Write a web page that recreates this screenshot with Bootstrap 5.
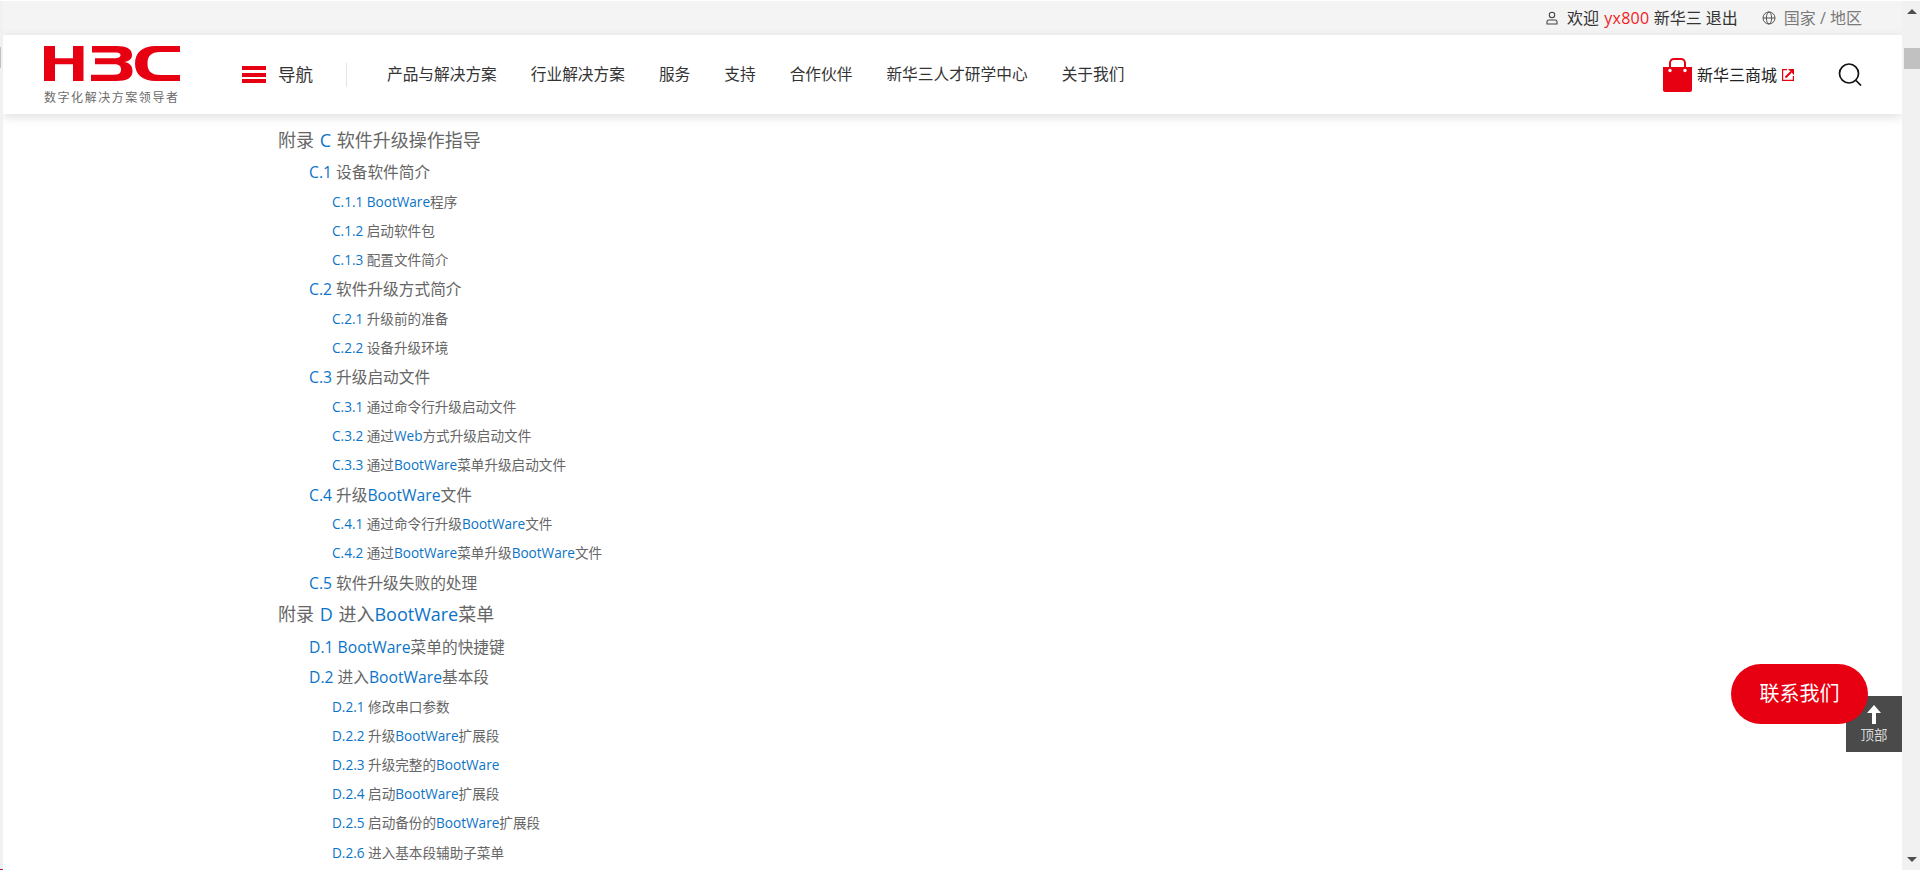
<!doctype html>
<html lang="zh-CN"><head><meta charset="utf-8"><title>H3C</title>
<link href="https://cdn.jsdelivr.net/npm/bootstrap@5.3.0/dist/css/bootstrap.min.css" rel="stylesheet">
<style>
html,body{height:870px;overflow:hidden;background:#fff}
body{font-family:"Open Sans","Noto Sans CJK SC",sans-serif;color:#666;padding-top:1px}
.ledge{width:3px;flex:none;background:#f1f1f1;height:869px;position:relative}
.ledge i{position:absolute;left:0;top:46px;width:1px;height:21px;background:#c1c1c1}
.ledge b{position:absolute;left:0;bottom:0;width:3px;height:1px;background:linear-gradient(90deg,#e60012 66%,#0b74c8 66%)}
.pg{height:869px;overflow:hidden;min-width:0}
.topstrip{height:34px;background:#f4f4f4;font-size:16px;color:#333;padding-right:40px}
.topstrip .red{color:#f01c24;letter-spacing:.3px;margin-left:1px}
.topstrip .grey{color:#7a7a7a}
.hdr{height:79px;background:#fff;box-shadow:0 3px 10px rgba(0,0,0,.13);position:relative;z-index:2;padding-left:41px}
.logotxt{font-size:12px;color:#6b6b6b;line-height:14px;letter-spacing:1.55px;margin-top:10px;white-space:nowrap}
.logobox{width:136px;height:58px;margin-top:1px}
.logobox svg{display:block}
.burger{width:24px;height:17px;display:flex;flex-direction:column;justify-content:space-between;margin-left:62px}
.burger i{display:block;height:4px;background:#e60012}
.navlbl{font-size:17.5px;color:#333;margin-left:12px}
.vsep{width:1px;height:24px;background:#e4e4e4;margin:0 40px 0 33px}
.mainnav{gap:34px;font-size:15.7px;color:#333}
.shop{font-size:16px;color:#222;margin-right:44px;gap:5px}
.srch{margin-right:40px}
.toc{padding:9px 0 0 275px;position:relative}
.toc a{color:#0b74c8;text-decoration:none}
.t1{font-size:18px;line-height:34px;height:34px;word-spacing:1px}
.t1.tail{margin-bottom:1px}
.t2{font-size:15.7px;line-height:29.7px;height:29.7px;padding-left:31px;padding-top:1px}
.t3{font-size:13.6px;line-height:29.2px;height:29.2px;padding-left:54px}
.sbar{width:18px;background:#f1f1f1;height:869px;position:relative;flex:none}
.sthumb{position:absolute;top:47px;left:2px;right:0;height:21px;background:#c1c1c1}
.aup,.adn{position:absolute;left:5px;width:0;height:0;border-left:5px solid transparent;border-right:5px solid transparent}
.aup{top:8px;border-bottom:5px solid #505050}
.adn{bottom:8px;border-top:5px solid #505050}
.totop{position:absolute;left:1846px;top:696px;width:56px;height:56px;background:#4a4a4a;color:#d8d8d8;font-size:13.5px;text-align:center;padding-top:9px;line-height:14px;z-index:3}
.contact{position:absolute;left:1731px;top:664px;width:137px;height:60px;border-radius:30px;background:#e60012;color:#fff;font-size:20px;z-index:4}
</style></head>
<body class="d-flex">
<div class="ledge"><i></i><b></b></div>
<div class="pg flex-grow-1">
<div class="topstrip d-flex align-items-center justify-content-end">
<svg width="14" height="14" viewBox="0 0 14 14" fill="none" stroke="#444" stroke-width="1.1" class="me-2"><circle cx="7" cy="4" r="2.7"/><path d="M2 13v-2.200c0-1 .8-1.800 1.800-1.800h6.400c1 0 1.800.8 1.800 1.800V13z"/></svg>
<span>欢迎&nbsp;<span class="red">yx800</span>&nbsp;新华三&nbsp;退出</span>
<svg width="14" height="14" viewBox="0 0 14 14" fill="none" stroke="#555" stroke-width="1" class="ms-4 me-2"><circle cx="7" cy="7" r="6"/><ellipse cx="7" cy="7" rx="2.600" ry="6"/><path d="M1 7h12"/></svg>
<span class="grey">国家 / 地区</span>
</div>
<header class="hdr d-flex align-items-center">
<div class="logobox"><svg width="136" height="35" viewBox="0 0 136 35" fill="#e60012" role="img" aria-label="H3C"><path d="M0 0h11v12.300h18V0h10.500v35H29V18.300H11V35H0z"/><path d="M48 0H72C83 0 88 3 88 9C88 13 85 15.500 80 16C85 16.500 88.500 19.500 88.500 25C88.500 32 83 35 72 35H47V28.700H70C75 28.700 77 27 77 23.500C77 20 75 18.300 70 18.300H51V12.300H70C74.500 12.300 76.500 11 76.500 9C76.500 7.300 74.500 6.500 70 6.500H48z"/><path d="M136 0H112C98 0 91 7 91 17.500C91 28 98 35 112 35H136V29H116C107 29 103.500 25 103.500 17.500C103.500 10 107 6 116 6H136z"/></svg><div class="logotxt">数字化解决方案领导者</div></div>
<div class="burger"><i></i><i></i><i></i></div>
<span class="navlbl">导航</span><span class="vsep"></span>
<nav class="mainnav d-flex"><span>产品与解决方案</span><span>行业解决方案</span><span>服务</span><span>支持</span><span>合作伙伴</span><span>新华三人才研学中心</span><span>关于我们</span></nav>
<div class="ms-auto d-flex align-items-center shop">
<svg width="29" height="34" viewBox="0 0 29 34"><path d="M7 11V5c0-2.500 2-4 4-4h7c2 0 4 1.500 4 4v6" fill="none" stroke="#e60012" stroke-width="2"/><path d="M0 9h29v23c0 1-1 2-2 2H2c-1 0-2-1-2-2z" fill="#e60012"/><circle cx="7" cy="12.500" r="1.700" fill="#fff"/><circle cx="22" cy="12.500" r="1.700" fill="#fff"/></svg>
<span>新华三商城</span>
<svg width="12" height="12" viewBox="0 0 12 12" fill="none" stroke="#e60012"><path d="M5 .6H.6v10.800h10.800V7" stroke-width="1.200"/><path d="M3.500 8.500L9 3" stroke-width="2"/><path d="M6 0h6v6z" fill="#e60012" stroke="none"/></svg>
</div>
<svg width="24" height="23" viewBox="0 0 24 23" fill="none" stroke="#111" stroke-width="1.700" class="srch"><circle cx="11" cy="10.500" r="9.500"/><path d="M18 17.500l5 5"/></svg>
</header>
<main class="toc">
<div class="t1">附录 <a href="#">C</a> 软件升级操作指导</div>
<div class="t2"><a href="#">C.1</a> 设备软件简介</div>
<div class="t3"><a href="#">C.1.1</a> <a href="#">BootWare</a>程序</div>
<div class="t3"><a href="#">C.1.2</a> 启动软件包</div>
<div class="t3"><a href="#">C.1.3</a> 配置文件简介</div>
<div class="t2"><a href="#">C.2</a> 软件升级方式简介</div>
<div class="t3"><a href="#">C.2.1</a> 升级前的准备</div>
<div class="t3"><a href="#">C.2.2</a> 设备升级环境</div>
<div class="t2"><a href="#">C.3</a> 升级启动文件</div>
<div class="t3"><a href="#">C.3.1</a> 通过命令行升级启动文件</div>
<div class="t3"><a href="#">C.3.2</a> 通过<a href="#">Web</a>方式升级启动文件</div>
<div class="t3"><a href="#">C.3.3</a> 通过<a href="#">BootWare</a>菜单升级启动文件</div>
<div class="t2"><a href="#">C.4</a> 升级<a href="#">BootWare</a>文件</div>
<div class="t3"><a href="#">C.4.1</a> 通过命令行升级<a href="#">BootWare</a>文件</div>
<div class="t3"><a href="#">C.4.2</a> 通过<a href="#">BootWare</a>菜单升级<a href="#">BootWare</a>文件</div>
<div class="t2"><a href="#">C.5</a> 软件升级失败的处理</div>
<div class="t1 tail">附录 <a href="#">D</a> 进入<a href="#">BootWare</a>菜单</div>
<div class="t2"><a href="#">D.1</a> <a href="#">BootWare</a>菜单的快捷键</div>
<div class="t2"><a href="#">D.2</a> 进入<a href="#">BootWare</a>基本段</div>
<div class="t3"><a href="#">D.2.1</a> 修改串口参数</div>
<div class="t3"><a href="#">D.2.2</a> 升级<a href="#">BootWare</a>扩展段</div>
<div class="t3"><a href="#">D.2.3</a> 升级完整的<a href="#">BootWare</a></div>
<div class="t3"><a href="#">D.2.4</a> 启动<a href="#">BootWare</a>扩展段</div>
<div class="t3"><a href="#">D.2.5</a> 启动备份的<a href="#">BootWare</a>扩展段</div>
<div class="t3"><a href="#">D.2.6</a> 进入基本段辅助子菜单</div>
</main>
</div>
<aside class="sbar"><i class="aup"></i><i class="sthumb"></i><i class="adn"></i></aside>
<div class="contact d-flex align-items-center justify-content-center">联系我们</div>
<div class="totop"><svg width="14" height="19" viewBox="0 0 14 19" class="d-block mx-auto mb-1"><path d="M7 0l7 8H9v11H5V8H0z" fill="#fff"/></svg>顶部</div>
</body></html>
